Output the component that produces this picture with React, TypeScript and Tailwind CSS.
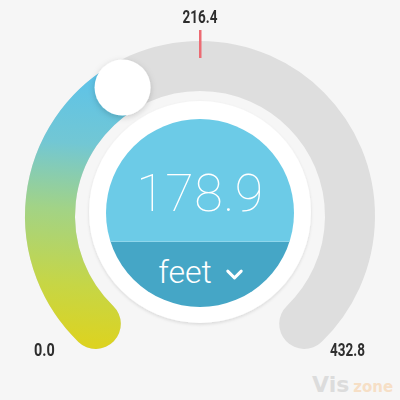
import { ChevronDown } from "lucide-react";

// gauge geometry (px in the 400x400 canvas)
const CX = 200;
const CY = 216;
const R = 150;
const SPAN = 136; // degrees each side of 12 o'clock

const MIN = 0;
const MAX = 432.8;
const VALUE = 178.9;

function polar(deg: number) {
  const a = (deg * Math.PI) / 180;
  return { x: CX + R * Math.sin(a), y: CY - R * Math.cos(a) };
}

function arcPath(from: number, to: number) {
  const s = polar(from);
  const e = polar(to);
  const large = to - from > 180 ? 1 : 0;
  return `M ${s.x} ${s.y} A ${R} ${R} 0 ${large} 1 ${e.x} ${e.y}`;
}

export default function App() {
  const frac = (VALUE - MIN) / (MAX - MIN);
  // the dial is drawn a little behind the linear position
  const knobDeg = -SPAN + frac * SPAN * 2 - 7.5;
  const knob = polar(knobDeg);

  return (
    <div className="relative w-[400px] h-[400px] overflow-hidden bg-[#f6f6f6] font-['Roboto',sans-serif]">
      <svg className="absolute inset-0" width={400} height={400} viewBox="0 0 400 400">
        <defs>
          <linearGradient id="fill" gradientUnits="userSpaceOnUse" x1="100" y1="345" x2="120" y2="80">
            <stop offset="0" stopColor="#dcd321" />
            <stop offset="0.22" stopColor="#c6d646" />
            <stop offset="0.5" stopColor="#a2d386" />
            <stop offset="0.75" stopColor="#72c7d4" />
            <stop offset="1" stopColor="#5ec3e8" />
          </linearGradient>
          <filter id="soft" x="-30%" y="-30%" width="160%" height="160%">
            <feDropShadow dx="0" dy="2" stdDeviation="3" floodColor="#000" floodOpacity="0.18" />
          </filter>
          <filter id="ring" x="-10%" y="-10%" width="120%" height="120%">
            <feDropShadow dx="0" dy="1.5" stdDeviation="1.5" floodColor="#000" floodOpacity="0.12" />
          </filter>
        </defs>

        {/* track */}
        <path d={arcPath(-SPAN, SPAN)} fill="none" stroke="#dedede" strokeWidth={50} strokeLinecap="round" />
        {/* value */}
        <path d={arcPath(-SPAN, knobDeg)} fill="none" stroke="url(#fill)" strokeWidth={50} strokeLinecap="round" />

        {/* mid marker */}
        <rect x={199} y={30} width={2.5} height={28} fill="#ec6b73" />

        {/* white ring behind the readout */}
        <circle cx={200} cy={212} r={111} fill="#ffffff" filter="url(#ring)" />

        {/* knob */}
        <circle cx={knob.x} cy={knob.y} r={28} fill="#ffffff" filter="url(#soft)" />
      </svg>

      {/* scale labels */}
      <span className="absolute left-0 w-[400px] top-[8px] text-center text-[18px] font-bold leading-none text-[#2e2e2e] scale-x-[0.75]">
        216.4
      </span>
      <span className="absolute left-[34px] top-[341px] text-[18px] font-bold leading-none text-[#2e2e2e] scale-x-[0.8] origin-left">
        0.0
      </span>
      <span className="absolute left-[330px] top-[341px] text-[18px] font-bold leading-none text-[#2e2e2e] scale-x-[0.75] origin-left">
        432.8
      </span>

      {/* readout */}
      <div className="absolute left-[106px] top-[119px] w-[188px] h-[188px] rounded-full overflow-hidden flex flex-col">
        <div className="h-[123px] bg-[#6ccbe7] flex justify-center pt-[49px] border-b border-[#8fd6eb]">
          <span className="text-[52px] leading-none font-thin text-white tracking-[0.5px]">178.9</span>
        </div>
        <div className="flex-1 bg-[#45a6c6] flex justify-center items-start gap-[9px] pt-[14px] pl-[6px]">
          <span className="text-[32px] leading-none font-light text-white">feet</span>
          <ChevronDown className="mt-[5px] w-[27px] h-[27px] text-white" strokeWidth={2.6} />
        </div>
      </div>

      {/* watermark */}
      <div className="absolute left-[312px] top-[374px] flex items-baseline gap-[4px] font-['DejaVu_Sans',sans-serif] font-bold">
        <span className="text-[22px] leading-none text-[#dcdcdc]">Vis</span>
        <span className="text-[15px] leading-none text-[#f6dfc6]">zone</span>
      </div>
    </div>
  );
}
